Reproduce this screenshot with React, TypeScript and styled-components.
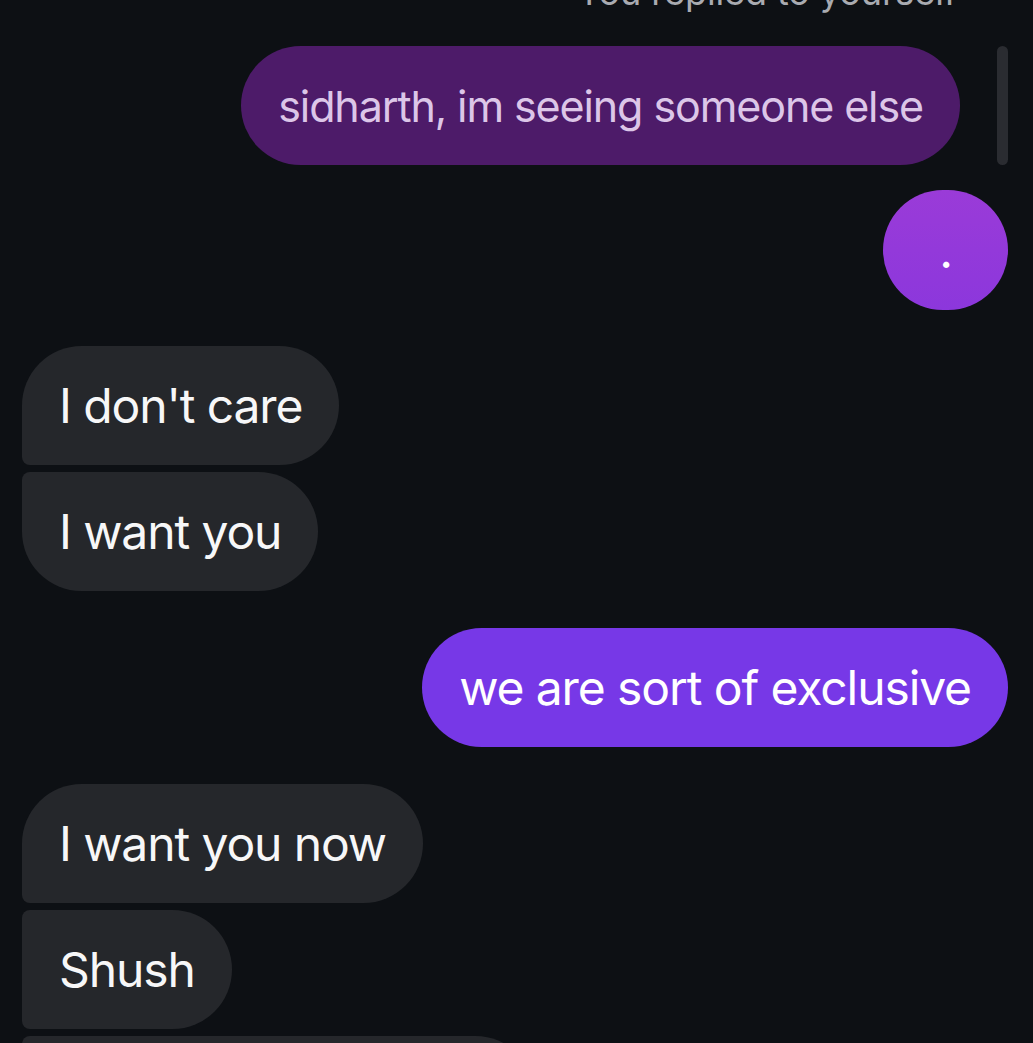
import React from 'react';
import styled, { createGlobalStyle, css } from 'styled-components';

const GlobalStyle = createGlobalStyle`
  html, body {
    margin: 0;
    padding: 0;
    background: #0d1014;
  }
  body {
    font-family: Inter, "Noto Sans", sans-serif;
  }
`;

const Thread = styled.div`
  display: flex;
  flex-direction: column;
  height: 1043px;
  overflow: hidden;
  padding: 0 25px 0 22px;
  box-sizing: border-box;
  background: #0d1014;
`;

const ReplyLabel = styled.div`
  align-self: flex-end;
  flex-shrink: 0;
  margin: -28px 51px 0 0;
  color: #a9abb1;
  font-size: 36px;
  line-height: 40px;
  letter-spacing: -0.1px;
`;

const ReplyRow = styled.div`
  display: flex;
  flex-shrink: 0;
  justify-content: flex-end;
  gap: 37px;
  margin-top: 34px;
`;

const ReplyBar = styled.div`
  width: 11px;
  height: 119px;
  border-radius: 6px;
  background: #2a2c31;
`;

type Tone = 'quoted' | 'dot' | 'sent' | 'received';
type Corner = 'single' | 'first' | 'middle' | 'last';

const tones: Record<Tone, string> = {
  quoted: 'background: #4d1b69; color: #dcc6e8; font-size: 43px; letter-spacing: -1.1px;',
  dot: 'background: linear-gradient(180deg, #9a3bd8 0%, #8c37dc 100%); color: #ffffff;',
  sent: 'background: #7738e7; color: #ffffff;',
  received: 'background: #25272b; color: #f7f7f8;',
};

const corners: Record<Corner, string> = {
  single: '60px',
  first: '60px 60px 60px 8px',
  middle: '8px 60px 60px 8px',
  last: '8px 60px 60px 60px',
};

const Bubble = styled.div<{ $tone: Tone; $corner?: Corner; $gap?: number }>`
  display: inline-flex;
  flex-shrink: 0;
  align-items: center;
  box-sizing: border-box;
  height: 119px;
  padding: 0 37px;
  font-size: 48px;
  letter-spacing: -1.1px;
  white-space: nowrap;
  margin-top: ${(p) => p.$gap ?? 0}px;
  border-radius: ${(p) => corners[p.$corner ?? 'single']};
  ${(p) => tones[p.$tone]}
  ${(p) =>
    p.$tone === 'received'
      ? css`align-self: flex-start;`
      : css`align-self: flex-end;`}
`;

const DotBubble = styled(Bubble)`
  width: 125px;
  height: 120px;
  padding: 0;
  justify-content: center;
`;

const App: React.FC = () => {
  return (
    <>
      <GlobalStyle />
      <Thread>
        <ReplyLabel>You replied to yourself</ReplyLabel>
        <ReplyRow>
          <Bubble $tone="quoted">sidharth, im seeing someone else</Bubble>
          <ReplyBar />
        </ReplyRow>
        <DotBubble $tone="dot" $gap={25}>.</DotBubble>
        <Bubble $tone="received" $corner="first" $gap={36}>I don't care</Bubble>
        <Bubble $tone="received" $corner="last" $gap={7}>I want you</Bubble>
        <Bubble $tone="sent" $gap={37}>we are sort of exclusive</Bubble>
        <Bubble $tone="received" $corner="first" $gap={37}>I want you now</Bubble>
        <Bubble $tone="received" $corner="middle" $gap={7}>Shush</Bubble>
        <Bubble $tone="received" $corner="middle" $gap={7}>Just come over now</Bubble>
      </Thread>
    </>
  );
};

export default App;
